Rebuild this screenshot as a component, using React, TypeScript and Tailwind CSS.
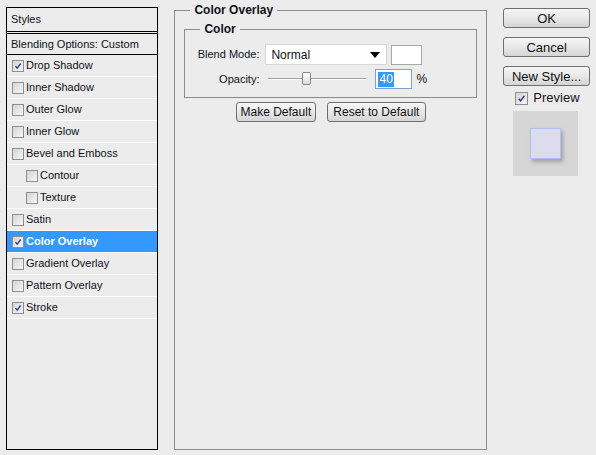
import React from 'react';

const font = { fontFamily: '"Liberation Sans", Arial, sans-serif' };

const Check: React.FC<{ checked?: boolean; size?: number }> = ({ checked, size = 12 }) => (
  <span
    className="relative inline-block shrink-0 border border-[#8f8f8f] bg-gradient-to-br from-[#d4d4d4] to-[#f7f7f7]"
    style={{ width: size, height: size }}
  >
    {checked && (
      <svg viewBox="0 0 12 12" className="absolute inset-0 w-full h-full">
        <path d="M3 6.2 L5 8.6 L9.2 3" fill="none" stroke="#2d3b8e" strokeWidth="1.6" />
      </svg>
    )}
  </span>
);

const styleRows = [
  { label: 'Drop Shadow', checked: true },
  { label: 'Inner Shadow' },
  { label: 'Outer Glow' },
  { label: 'Inner Glow' },
  { label: 'Bevel and Emboss' },
  { label: 'Contour', indent: true },
  { label: 'Texture', indent: true },
  { label: 'Satin' },
  { label: 'Color Overlay', checked: true, active: true },
  { label: 'Gradient Overlay' },
  { label: 'Pattern Overlay' },
  { label: 'Stroke', checked: true },
];

const Btn: React.FC<{ children: React.ReactNode; className?: string }> = ({ children, className = '' }) => (
  <button
    className={`h-[20px] rounded-[3px] border border-[#707070] bg-gradient-to-b from-[#f6f6f6] via-[#e8e8e8] to-[#d4d4d4] text-[12px] leading-none text-[#111] ${className}`}
  >
    {children}
  </button>
);

export default function App() {
  return (
    <div className="w-[596px] h-[455px] bg-[#ececec] flex px-[6px] text-[11px] text-[#101018]" style={font}>
      {/* Styles list */}
      <div className="mt-[7px] w-[153px] h-[443px] border border-black flex flex-col">
        <div className="h-[24px] flex items-center pl-[4px] border-b border-black">Styles</div>
        <div className="h-[22px] mt-[1px] border-t border-b border-black flex items-center pl-[4px]">
          Blending Options: Custom
        </div>
        {styleRows.map((r) => (
          <div
            key={r.label}
            className={`h-[22px] flex items-center gap-[2px] border-b border-white ${r.indent ? 'pl-[19px]' : 'pl-[5px]'} ${
              r.active ? 'bg-[#3399ff] text-white font-bold' : ''
            }`}
          >
            <Check checked={r.checked} size={12} />
            <span>{r.label}</span>
          </div>
        ))}
      </div>

      {/* Color Overlay group */}
      <fieldset className="mt-[3px] ml-[16px] w-[314px] h-[447px] border border-[#8c8c8c] flex flex-col">
        <legend className="ml-[15px] px-[4px] font-bold text-[12px] leading-[14px]">Color Overlay</legend>
        <fieldset className="mt-[5px] mx-[9px] h-[76px] border border-[#8c8c8c]">
          <legend className="ml-[15px] px-[4px] font-bold text-[12px] leading-[14px]">Color</legend>
          <div className="mt-[8px] flex items-center">
            <span className="w-[74px] text-right">Blend Mode:</span>
            <div className="ml-[6px] w-[122px] h-[21px] bg-white border border-[#d6d6d6] flex items-center justify-between pl-[5px] pr-[6px] text-[12px]">
              <span>Normal</span>
              <svg width="10" height="6" viewBox="0 0 10 6">
                <path d="M0 0 H10 L5 6 Z" fill="#000" />
              </svg>
            </div>
            <div className="ml-[4px] w-[31px] h-[20px] bg-white border border-[#a8a8a8]" />
          </div>
          <div className="mt-[4px] flex items-center">
            <span className="w-[74px] text-right">Opacity:</span>
            <div className="ml-[9px] w-[98px] h-[14px] relative flex items-center">
              <div className="w-full h-[2px] border-t border-[#a0a0a0] border-b border-b-white" />
              <div className="absolute left-[34px] top-0 w-[9px] h-[13px] rounded-[2px] border border-[#8a8a8a] bg-gradient-to-b from-white to-[#dcdcdc]" />
            </div>
            <div className="ml-[9px] w-[37px] h-[20px] bg-white border border-[#7da2ce] flex items-center pl-[2px] text-[12px]">
              <span className="bg-[#3399ff] text-white px-[1px] leading-[15px]">40</span>
            </div>
            <span className="ml-[4px] text-[12px]">%</span>
          </div>
        </fieldset>
        <div className="mt-[4px] flex justify-center gap-[11px]">
          <Btn className="w-[80px]">Make Default</Btn>
          <Btn className="w-[99px]">Reset to Default</Btn>
        </div>
      </fieldset>

      {/* Right column */}
      <div className="mt-[8px] ml-[16px] w-[87px] flex flex-col items-stretch">
        <Btn className="h-[19px] border-[#3c7fb1] text-[13px]">OK</Btn>
        <Btn className="mt-[9px] h-[19px] text-[13px]">Cancel</Btn>
        <Btn className="mt-[9px] h-[19px] text-[13px]">New Style...</Btn>
        <div className="mt-[5px] ml-[12px] h-[14px] flex items-center gap-[5px] text-[13px] leading-[14px]">
          <Check checked size={13} />
          <span>Preview</span>
        </div>
        <div className="mt-[6px] ml-[10px] w-[65px] h-[65px] bg-[#d6d6d6] flex items-center justify-center">
          <div className="w-[31px] h-[31px] bg-[#dcdcec] border border-[#b3bff2] shadow-[2px_3px_4px_rgba(0,0,0,0.25)]" />
        </div>
      </div>
    </div>
  );
}
